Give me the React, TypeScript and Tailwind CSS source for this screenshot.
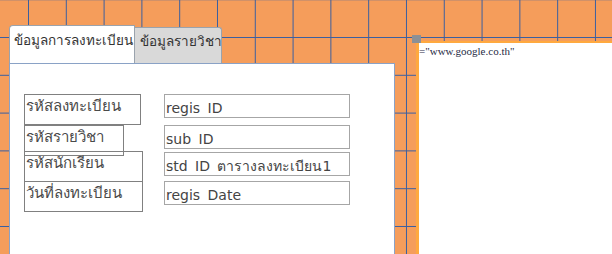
const FONT = "font-['DejaVu_Sans','Noto_Sans',sans-serif]";

const labels = [
  { text: "รหัสลงทะเบียน", box: "left-[14px] top-[30px] w-[117px]" },
  { text: "รหัสรายวิชา", box: "left-[14px] top-[61px] w-[100px]" },
  { text: "รหัสนักเรียน", box: "left-[14px] top-[87px] w-[119px]" },
  { text: "วันที่ลงทะเบียน", box: "left-[14px] top-[117px] w-[119px]" },
];

const fields = [
  { text: "regis ID", box: "top-[30px]" },
  { text: "sub ID", box: "top-[61px]" },
  { text: "std ID ตารางลงทะเบียน1", box: "top-[88px]" },
  { text: "regis Date", box: "top-[117px]" },
];

export default function App() {
  return (
    <div
      className={`relative flex items-start w-[612px] h-[254px] overflow-hidden pl-[9px] pt-[26px] bg-[#f59d5b] bg-[linear-gradient(to_right,#3a5fa0_1px,transparent_1px),linear-gradient(to_bottom,#3a5fa0_1px,transparent_1px)] bg-[length:37.8px_37.8px] bg-[position:28px_37px] ${FONT}`}
    >
      {/* tab control */}
      <div className="shrink-0 w-[386px] h-[240px] flex flex-col">
        <div className="flex items-end h-[37px]">
          <div className="relative z-10 h-[38px] w-[126px] whitespace-nowrap bg-white border border-b-0 border-[#9aa3ad] rounded-tl-[4px] pl-[4px] pt-[8px] text-[13.5px] text-[#333] leading-none">
            ข้อมูลการลงทะเบียน
          </div>
          <div className="h-[36px] w-[87px] whitespace-nowrap bg-[#d9d9d9] border border-l-0 border-b-0 border-[#9aa3ad] rounded-tr-[3px] pl-[5px] pt-[7px] text-[13.5px] text-[#333] leading-none">
            ข้อมูลรายวิชา
          </div>
        </div>
        <div className="relative flex-1 bg-white border border-[#8aa2c6]">
          {labels.map((l) => (
            <div
              key={l.text}
              className={`absolute ${l.box} h-[31px] whitespace-nowrap border border-[#808080] pl-[1px] text-[15px] leading-[22px] text-[#4a4a4a]`}
            >
              {l.text}
            </div>
          ))}
          {fields.map((f) => (
            <div
              key={f.text}
              className={`absolute left-[154px] ${f.box} w-[186px] h-[24px] whitespace-nowrap border border-[#a6a6a6] pl-[1px] pt-[4px] text-[14px] leading-[18px] text-[#444] [word-spacing:3px]`}
            >
              {f.text}
            </div>
          ))}
        </div>
      </div>

      {/* subform */}
      <div className="shrink-0 ml-[21px] mt-[15px] w-[200px] h-[220px] bg-white border-t-[2px] border-l-[3px] border-[#ffa93f]">
        <div className="pt-[3px] font-['Liberation_Serif',serif] text-[11px] leading-none text-[#1f2b45]">
          ="www.google.co.th"
        </div>
      </div>
      <div className="absolute left-[412px] top-[35px] w-[9px] h-[8px] bg-[#8c9096]" />
    </div>
  );
}
